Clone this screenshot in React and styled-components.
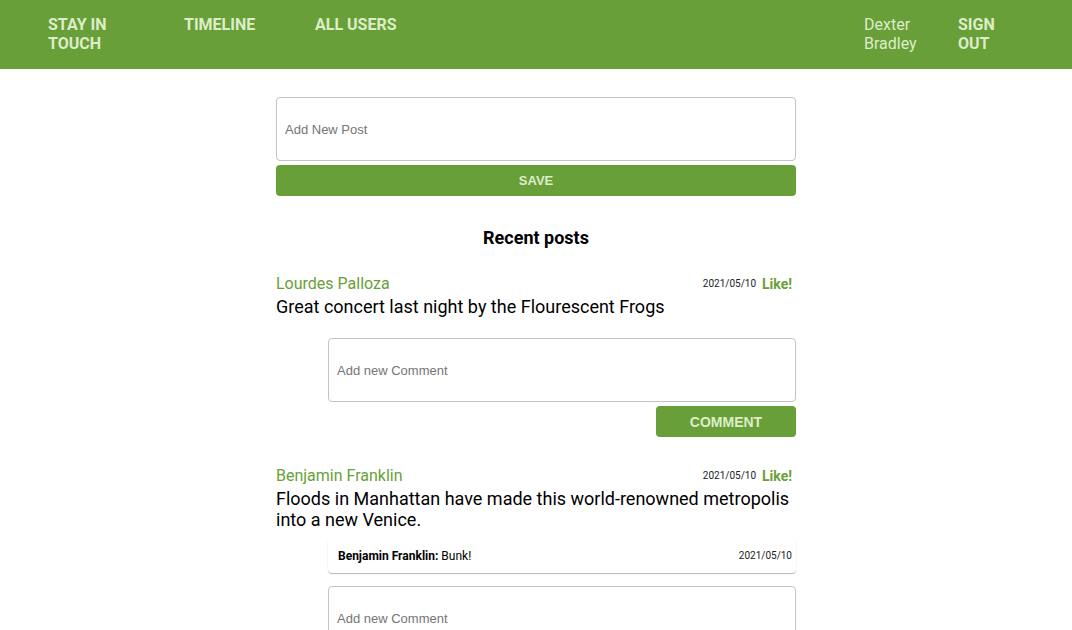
import React from "react";
import styled, { createGlobalStyle } from "styled-components";

const GREEN = "#689f38";
const LIGHT = "#dcedc8";

const GlobalStyle = createGlobalStyle`
  * { box-sizing: border-box; }
  body {
    margin: 0;
    font-family: Roboto, "Liberation Sans", sans-serif;
    background: #fff;
    color: #000;
  }
`;

const Header = styled.header`
  height: 69px;
  background: ${GREEN};
  display: flex;
  justify-content: space-between;
  align-items: flex-start;
  padding: 15px 64px 0 48px;
`;

const NavGroup = styled.nav`
  display: flex;
  align-items: flex-start;
`;

const NavLink = styled.a`
  display: block;
  width: ${({ $w }) => $w}px;
  padding-right: ${({ $pr }) => $pr || 0}px;
  color: ${LIGHT};
  font-size: 16px;
  line-height: 19px;
  font-weight: ${({ $plain }) => ($plain ? 400 : 700)};
  text-decoration: none;
  cursor: pointer;
`;

const Main = styled.main`
  width: 520px;
  margin: 0 auto;
  padding-top: 28px;
`;

const Field = styled.input`
  display: block;
  width: 100%;
  height: 64px;
  border: 1px solid #c4c4c4;
  border-radius: 4px;
  padding: 0 8px;
  font-family: "Liberation Sans", Arial, sans-serif;
  font-size: 13px;
  color: #333;
  outline: none;
  &::placeholder {
    color: #757575;
  }
`;

const Button = styled.button`
  display: block;
  width: ${({ $w }) => ($w ? `${$w}px` : "100%")};
  margin-left: auto;
  height: 31px;
  margin-top: 4px;
  border: none;
  border-radius: 4px;
  background: ${GREEN};
  color: ${LIGHT};
  font-family: "Liberation Sans", Arial, sans-serif;
  font-weight: 700;
  font-size: ${({ $fs }) => $fs || 13}px;
  cursor: pointer;
`;

const Title = styled.h2`
  margin: 31px 0 23px;
  text-align: center;
  font-size: 18px;
  line-height: 22px;
  font-weight: 700;
`;

const Post = styled.article`
  margin-bottom: 27px;
`;

const PostHead = styled.div`
  display: flex;
  align-items: center;
  justify-content: space-between;
  padding-right: 4px;
`;

const Author = styled.span`
  color: ${GREEN};
  font-size: 16px;
  line-height: 23px;
`;

const Meta = styled.div`
  display: flex;
  align-items: center;
  gap: 6px;
`;

const Stamp = styled.span`
  font-size: 10px;
  color: #222;
`;

const Like = styled.span`
  color: ${GREEN};
  font-weight: 700;
  font-size: 14px;
  cursor: pointer;
`;

const Body = styled.p`
  margin: 1px 0 0;
  font-size: 18px;
  line-height: 21px;
`;

const Thread = styled.div`
  padding: 8px 0 0 52px;
`;

const Comment = styled.div`
  display: flex;
  justify-content: space-between;
  align-items: center;
  height: 35px;
  padding: 0 4px 0 10px;
  border-radius: 4px;
  box-shadow: 0 1px 1px rgba(0, 0, 0, 0.28);
`;

const CommentText = styled.span`
  font-size: 12px;
  b {
    font-weight: 700;
  }
`;

const Reply = styled.div`
  padding-top: 13px;
`;

const posts = [
  {
    author: "Lourdes Palloza",
    date: "2021/05/10",
    body: "Great concert last night by the Flourescent Frogs",
    comments: [],
  },
  {
    author: "Benjamin Franklin",
    date: "2021/05/10",
    body: "Floods in Manhattan have made this world-renowned metropolis into a new Venice.",
    comments: [{ author: "Benjamin Franklin", text: "Bunk!", date: "2021/05/10" }],
  },
];

export default function App() {
  return (
    <>
      <GlobalStyle />
      <Header>
        <NavGroup>
          <NavLink $w={136} $pr={46}>STAY IN TOUCH</NavLink>
          <NavLink $w={131}>TIMELINE</NavLink>
          <NavLink $w={100}>ALL USERS</NavLink>
        </NavGroup>
        <NavGroup>
          <NavLink $w={94} $pr={30} $plain>Dexter Bradley</NavLink>
          <NavLink $w={50}>SIGN OUT</NavLink>
        </NavGroup>
      </Header>
      <Main>
        <Field placeholder="Add New Post" />
        <Button>SAVE</Button>
        <Title>Recent posts</Title>
        {posts.map((p) => (
          <Post key={p.author}>
            <PostHead>
              <Author>{p.author}</Author>
              <Meta>
                <Stamp>{p.date}</Stamp>
                <Like>Like!</Like>
              </Meta>
            </PostHead>
            <Body>{p.body}</Body>
            <Thread>
              {p.comments.map((c, i) => (
                <Comment key={i}>
                  <CommentText>
                    <b>{c.author}:</b> {c.text}
                  </CommentText>
                  <Stamp>{c.date}</Stamp>
                </Comment>
              ))}
              <Reply>
                <Field placeholder="Add new Comment" />
                <Button $w={140} $fs={14}>COMMENT</Button>
              </Reply>
            </Thread>
          </Post>
        ))}
      </Main>
    </>
  );
}
